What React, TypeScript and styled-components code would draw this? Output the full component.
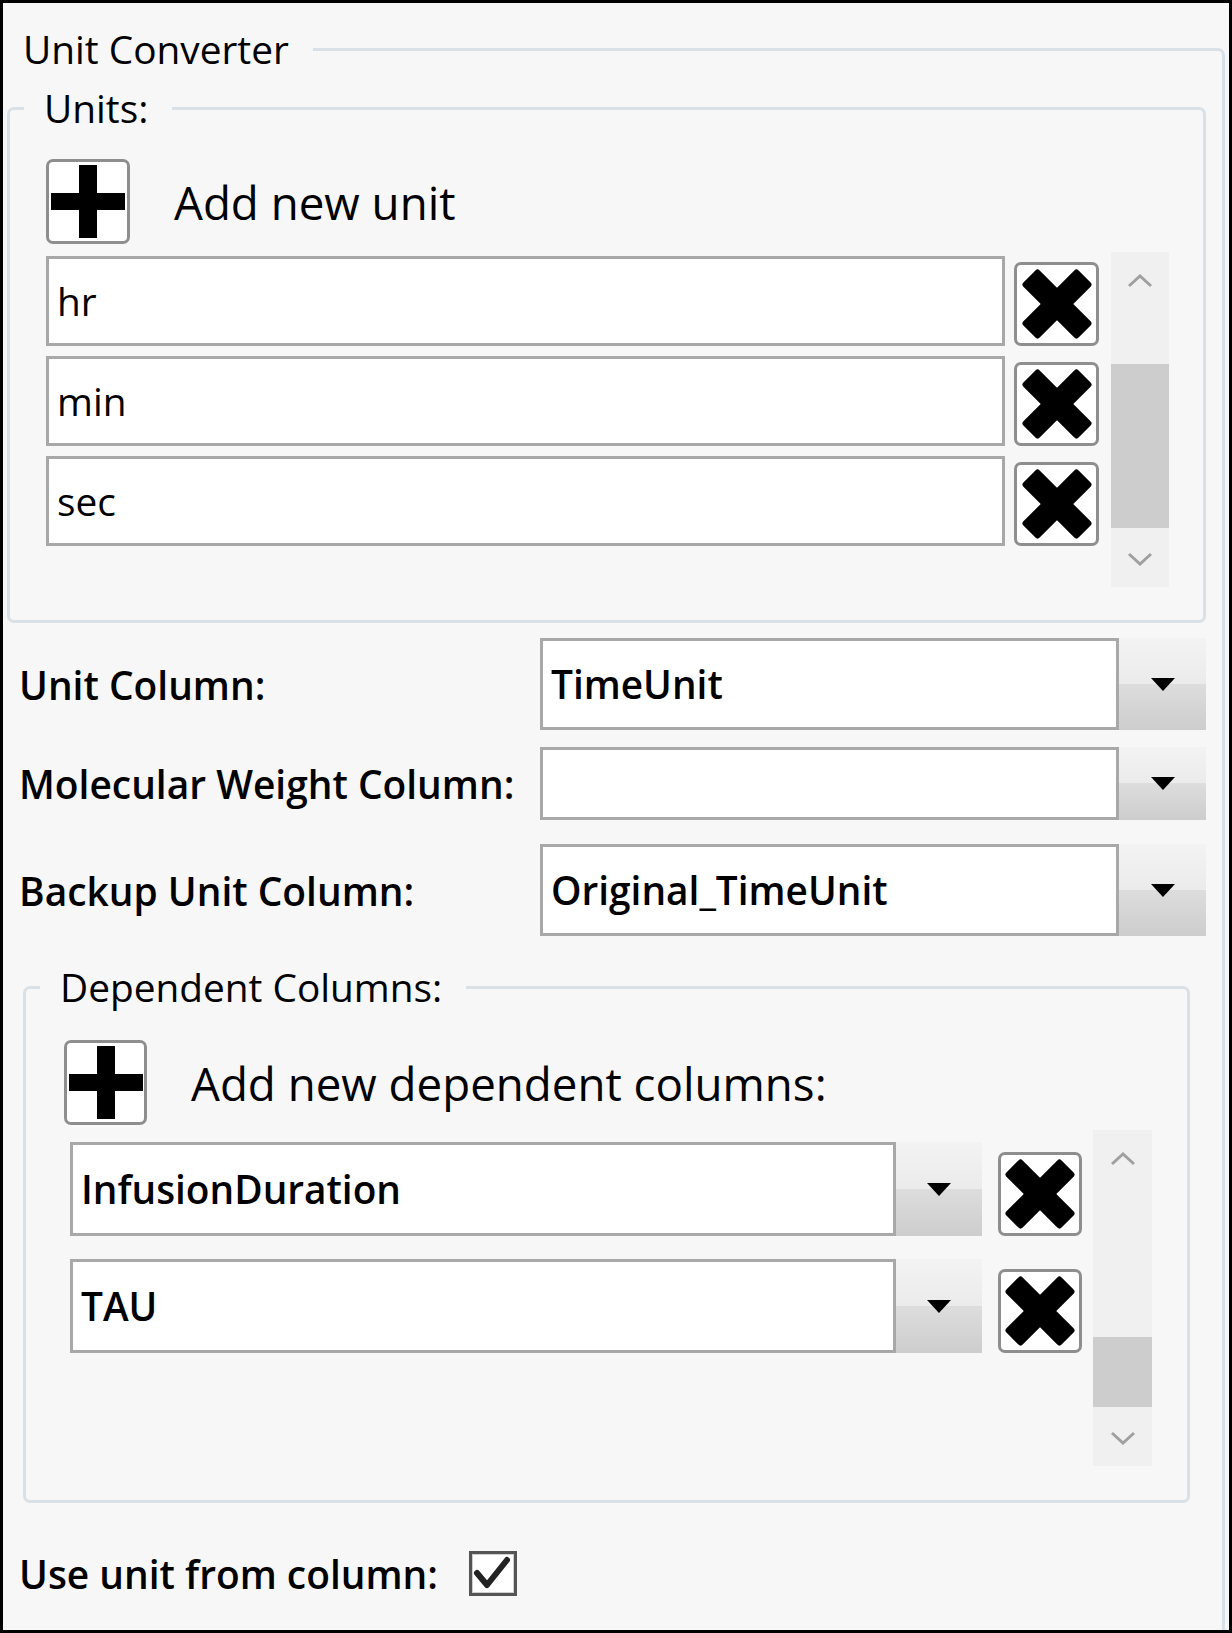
import React from "react";
import styled, { createGlobalStyle } from "styled-components";

const FONT = `"Open Sans", "Noto Sans", "Liberation Sans", sans-serif`;

const Global = createGlobalStyle`
  html, body { margin: 0; padding: 0; background: #ffffff; }
  body { font-family: ${FONT}; color: #000; }
  * { box-sizing: border-box; }
`;

const Frame = styled.div`
  width: 1232px;
  height: 1633px;
  border: 3px solid #000;
  background: #f7f7f7;
  overflow: hidden;
  padding-top: 20px;
`;

const Group = styled.fieldset<{ $mt: number; $ml: number; $mr: number; $outer?: boolean }>`
  margin: ${(p) => p.$mt}px ${(p) => p.$mr}px 0 ${(p) => p.$ml}px;
  padding: 0;
  min-width: 0;
  border: 3px solid #d9e1e7;
  border-radius: 7px;
  ${(p) =>
    p.$outer
      ? `border-left: none; border-bottom: none; border-radius: 0 7px 0 0; min-height: 1640px;`
      : ``}
`;

const OuterBody = styled.div`
  padding-right: 16px;
`;

const Legend = styled.legend<{ $indent: number }>`
  margin-left: ${(p) => p.$indent}px;
  padding: 0 24px 0 20px;
  font-size: 38.8px;
  line-height: 52px;
  height: 52px;
  white-space: nowrap;
`;

const GroupBody = styled.div<{ $pt: number; $pl: number; $pr: number; $pb: number }>`
  padding: ${(p) => p.$pt}px ${(p) => p.$pr}px ${(p) => p.$pb}px ${(p) => p.$pl}px;
  display: flex;
  flex-direction: column;
`;

const AddRow = styled.div`
  display: flex;
  align-items: center;
  gap: 44px;
`;

const AddText = styled.span`
  font-size: 45.7px;
  line-height: 60px;
  white-space: nowrap;
`;

const IconButton = styled.button<{ $w: number; $h: number }>`
  flex: none;
  width: ${(p) => p.$w}px;
  height: ${(p) => p.$h}px;
  padding: 0;
  border: 3px solid #8e8e8e;
  border-radius: 7px;
  background: #ffffff;
  display: flex;
  align-items: center;
  justify-content: center;
`;

const ListArea = styled.div<{ $mt: number; $h: number }>`
  margin-top: ${(p) => p.$mt}px;
  height: ${(p) => p.$h}px;
  display: flex;
  align-items: stretch;
`;

const Items = styled.div<{ $pt: number; $pl: number; $gap: number }>`
  flex: 1;
  padding: ${(p) => p.$pt}px 0 0 ${(p) => p.$pl}px;
  display: flex;
  flex-direction: column;
  gap: ${(p) => p.$gap}px;
`;

const ItemRow = styled.div<{ $gap: number }>`
  display: flex;
  align-items: flex-end;
  gap: ${(p) => p.$gap}px;
`;

const TextBox = styled.div<{ $h: number }>`
  flex: 1;
  height: ${(p) => p.$h}px;
  background: #ffffff;
  border: 3px solid #a8a8a8;
  padding-left: 8px;
  display: flex;
  align-items: center;
  font-size: 38.8px;
  white-space: nowrap;
`;

const Scrollbar = styled.div<{ $ml: number; $w: number }>`
  flex: none;
  margin-left: ${(p) => p.$ml}px;
  width: ${(p) => p.$w}px;
  background: #f0f0f0;
  display: flex;
  flex-direction: column;
`;

const ScrollArrow = styled.div`
  flex: none;
  height: 57px;
  display: flex;
  align-items: center;
  justify-content: center;
`;

const ScrollTrack = styled.div<{ $offset: number }>`
  flex: 1;
  padding-top: ${(p) => p.$offset}px;
`;

const Thumb = styled.div<{ $h: number }>`
  height: ${(p) => p.$h}px;
  background: #cdcdcd;
`;

const FormRow = styled.div<{ $mt: number }>`
  margin-top: ${(p) => p.$mt}px;
  padding-left: 16px;
  display: grid;
  grid-template-columns: 521px 1fr;
  align-items: center;
`;

const FieldLabel = styled.span`
  font-size: 38.9px;
  font-weight: 600;
  white-space: nowrap;
`;

const Combo = styled.div<{ $h: number; $flex?: boolean }>`
  height: ${(p) => p.$h}px;
  display: flex;
  ${(p) => (p.$flex ? "flex: 1;" : "")}
`;

const ComboText = styled.div`
  flex: 1;
  background: #ffffff;
  border: 3px solid #a8a8a8;
  padding-left: 8px;
  display: flex;
  align-items: center;
  font-size: 38.8px;
  font-weight: 600;
  white-space: nowrap;
`;

const ComboButton = styled.div<{ $w: number }>`
  flex: none;
  width: ${(p) => p.$w}px;
  background: linear-gradient(#f3f3f3 0%, #ebebeb 50%, #dddddd 50%, #cdcdcd 100%);
  display: flex;
  align-items: center;
  justify-content: center;
`;

const CheckRow = styled.div`
  margin-top: 44px;
  padding-left: 16px;
  display: flex;
  align-items: center;
  gap: 31px;
`;

const CheckBox = styled.div`
  flex: none;
  width: 48px;
  height: 45px;
  border: 3px solid #555555;
  box-shadow: inset 0 0 0 1px #cfcfcf;
  background: #ffffff;
  display: flex;
  align-items: center;
  justify-content: center;
`;

const PlusIcon = () => (
  <svg width="74" height="73" viewBox="0 0 74 73">
    <rect x="28" y="0" width="18" height="73" fill="#000" />
    <rect x="0" y="28" width="74" height="17" fill="#000" />
  </svg>
);

const CrossIcon = () => (
  <svg width="72" height="72" viewBox="0 0 72 72">
    <rect x="-3" y="24.5" width="78" height="23" rx="3" fill="#000" transform="rotate(45 36 36)" />
    <rect x="-3" y="24.5" width="78" height="23" rx="3" fill="#000" transform="rotate(-45 36 36)" />
  </svg>
);

const DownTriangle = () => (
  <svg width="24" height="13" viewBox="0 0 24 13">
    <polygon points="0,0 24,0 12,13" fill="#000" />
  </svg>
);

const Chevron = ({ up }: { up?: boolean }) => (
  <svg width="26" height="14" viewBox="0 0 26 14">
    <polyline
      points={up ? "2,12 13,2 24,12" : "2,2 13,12 24,2"}
      fill="none"
      stroke="#a0a0a0"
      strokeWidth="3"
    />
  </svg>
);

const Check = () => (
  <svg width="42" height="39" viewBox="0 0 42 39">
    <polyline
      points="5,19 15,31 35,6"
      fill="none"
      stroke="#222"
      strokeWidth="6"
      strokeLinejoin="round"
      strokeLinecap="round"
    />
  </svg>
);

type SBProps = { ml: number; w: number; offset: number; thumb: number };
const VScroll = ({ ml, w, offset, thumb }: SBProps) => (
  <Scrollbar $ml={ml} $w={w}>
    <ScrollArrow>
      <Chevron up />
    </ScrollArrow>
    <ScrollTrack $offset={offset}>
      <Thumb $h={thumb} />
    </ScrollTrack>
    <ScrollArrow>
      <Chevron />
    </ScrollArrow>
  </Scrollbar>
);

const units = ["hr", "min", "sec"];
const dependents = ["InfusionDuration", "TAU"];
const fields = [
  { label: "Unit Column:", value: "TimeUnit", h: 92, mt: 15 },
  { label: "Molecular Weight Column:", value: "", h: 73, mt: 17 },
  { label: "Backup Unit Column:", value: "Original_TimeUnit", h: 92, mt: 24 },
];

export default function App() {
  return (
    <>
      <Global />
      <Frame>
        <Group $outer $mt={0} $ml={0} $mr={4}>
          <Legend $indent={0}>Unit Converter</Legend>
          <OuterBody>
            <Group $mt={7} $ml={4} $mr={0}>
              <Legend $indent={14}>Units:</Legend>
              <GroupBody $pt={25} $pl={36} $pr={34} $pb={33}>
                <AddRow>
                  <IconButton $w={84} $h={85}>
                    <PlusIcon />
                  </IconButton>
                  <AddText>Add new unit</AddText>
                </AddRow>
                <ListArea $mt={8} $h={335}>
                  <Items $pt={4} $pl={0} $gap={10}>
                    {units.map((u) => (
                      <ItemRow key={u} $gap={9}>
                        <TextBox $h={90}>{u}</TextBox>
                        <IconButton $w={85} $h={84}>
                          <CrossIcon />
                        </IconButton>
                      </ItemRow>
                    ))}
                  </Items>
                  <VScroll ml={12} w={58} offset={55} thumb={164} />
                </ListArea>
              </GroupBody>
            </Group>

            {fields.map((f) => (
              <FormRow key={f.label} $mt={f.mt}>
                <FieldLabel>{f.label}</FieldLabel>
                <Combo $h={f.h}>
                  <ComboText>{f.value}</ComboText>
                  <ComboButton $w={87}>
                    <DownTriangle />
                  </ComboButton>
                </Combo>
              </FormRow>
            ))}

            <Group $mt={25} $ml={20} $mr={16}>
              <Legend $indent={14}>Dependent Columns:</Legend>
              <GroupBody $pt={27} $pl={38} $pr={35} $pb={34}>
                <AddRow>
                  <IconButton $w={83} $h={85}>
                    <PlusIcon />
                  </IconButton>
                  <AddText>Add new dependent columns:</AddText>
                </AddRow>
                <ListArea $mt={5} $h={336}>
                  <Items $pt={12} $pl={6} $gap={23}>
                    {dependents.map((d) => (
                      <ItemRow key={d} $gap={16}>
                        <Combo $h={94} $flex>
                          <ComboText>{d}</ComboText>
                          <ComboButton $w={86}>
                            <DownTriangle />
                          </ComboButton>
                        </Combo>
                        <IconButton $w={84} $h={84}>
                          <CrossIcon />
                        </IconButton>
                      </ItemRow>
                    ))}
                  </Items>
                  <VScroll ml={11} w={59} offset={150} thumb={70} />
                </ListArea>
              </GroupBody>
            </Group>

            <CheckRow>
              <FieldLabel>Use unit from column:</FieldLabel>
              <CheckBox>
                <Check />
              </CheckBox>
            </CheckRow>
          </OuterBody>
        </Group>
      </Frame>
    </>
  );
}
